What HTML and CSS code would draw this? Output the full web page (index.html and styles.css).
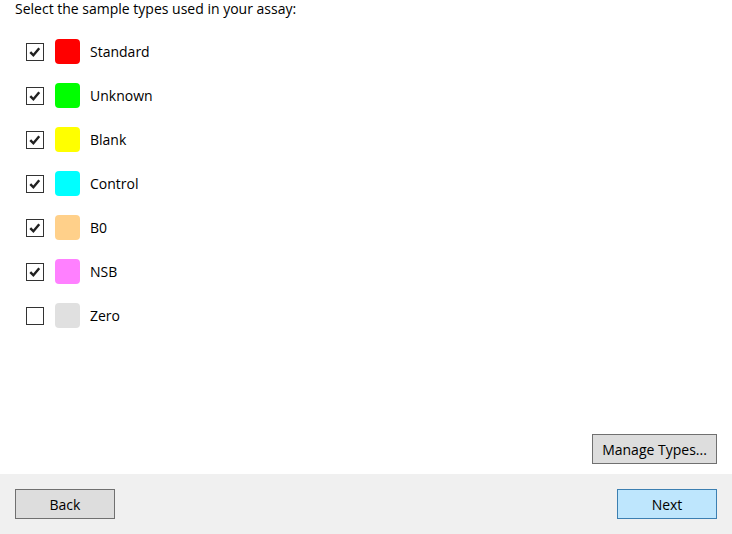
FILE: index.html
```html
<!DOCTYPE html>
<html>
<head>
<meta charset="utf-8">
<link rel="stylesheet" href="styles.css">
</head>
<body>
<div class="page">
  <div class="content">
    <div class="title">Select the sample types used in your assay:</div>
    <div class="list">
      <div class="row">
        <span class="check on"><svg viewBox="0 0 17 17"><path d="M3.5 8.6 L6.8 12 L13 4.6"/></svg></span>
        <span class="swatch" style="background:#ff0000"></span>
        <span class="label">Standard</span>
      </div>
      <div class="row">
        <span class="check on"><svg viewBox="0 0 17 17"><path d="M3.5 8.6 L6.8 12 L13 4.6"/></svg></span>
        <span class="swatch" style="background:#00ff00"></span>
        <span class="label">Unknown</span>
      </div>
      <div class="row">
        <span class="check on"><svg viewBox="0 0 17 17"><path d="M3.5 8.6 L6.8 12 L13 4.6"/></svg></span>
        <span class="swatch" style="background:#ffff00"></span>
        <span class="label">Blank</span>
      </div>
      <div class="row">
        <span class="check on"><svg viewBox="0 0 17 17"><path d="M3.5 8.6 L6.8 12 L13 4.6"/></svg></span>
        <span class="swatch" style="background:#00ffff"></span>
        <span class="label">Control</span>
      </div>
      <div class="row">
        <span class="check on"><svg viewBox="0 0 17 17"><path d="M3.5 8.6 L6.8 12 L13 4.6"/></svg></span>
        <span class="swatch" style="background:#ffd08a"></span>
        <span class="label">B0</span>
      </div>
      <div class="row">
        <span class="check on"><svg viewBox="0 0 17 17"><path d="M3.5 8.6 L6.8 12 L13 4.6"/></svg></span>
        <span class="swatch" style="background:#ff80ff"></span>
        <span class="label">NSB</span>
      </div>
      <div class="row">
        <span class="check"></span>
        <span class="swatch" style="background:#e0e0e0"></span>
        <span class="label">Zero</span>
      </div>
    </div>
    <div class="manage-bar">
      <button class="btn manage">Manage Types...</button>
    </div>
  </div>
  <div class="footer">
    <button class="btn nav">Back</button>
    <button class="btn nav primary">Next</button>
  </div>
</div>
</body>
</html>
```
FILE: styles.css
```css
html, body {
  margin: 0;
  padding: 0;
  background: #ffffff;
}
body {
  font-family: "Open Sans", "Noto Sans", sans-serif;
  font-size: 14px;
  color: #000000;
}
.page {
  width: 732px;
  height: 534px;
  display: flex;
  flex-direction: column;
  overflow: hidden;
}
.content {
  flex: 1;
  display: flex;
  flex-direction: column;
  padding: 0 15px 10px 15px;
}
.title {
  line-height: 18px;
  height: 18px;
}
.list {
  flex: 1;
  display: flex;
  flex-direction: column;
  padding-top: 11px;
  padding-left: 11px;
}
.row {
  height: 44px;
  display: flex;
  align-items: center;
}
.check {
  width: 16px;
  height: 16px;
  border: 1px solid #333333;
  background: #ffffff;
  box-sizing: content-box;
  display: flex;
  margin-top: 1px;
}
.check svg {
  width: 16px;
  height: 16px;
}
.check svg path {
  fill: none;
  stroke: #212121;
  stroke-width: 2.6;
}
.swatch {
  width: 25px;
  height: 25px;
  border-radius: 4px;
  margin-left: 11px;
}
.label {
  margin-left: 10px;
}
.manage-bar {
  display: flex;
  justify-content: flex-end;
}
.btn {
  font-family: inherit;
  font-size: 14px;
  color: #000;
  height: 30px;
  background: #dddddd;
  border: 1px solid #707070;
  padding: 0;
  margin: 0;
}
.manage {
  width: 125px;
}
.footer {
  height: 60px;
  background: #f0f0f0;
  display: flex;
  justify-content: space-between;
  align-items: center;
  padding: 0 15px;
}
.nav {
  width: 100px;
}
.primary {
  background: #bee6fd;
  border-color: #3c7fb1;
}
```
